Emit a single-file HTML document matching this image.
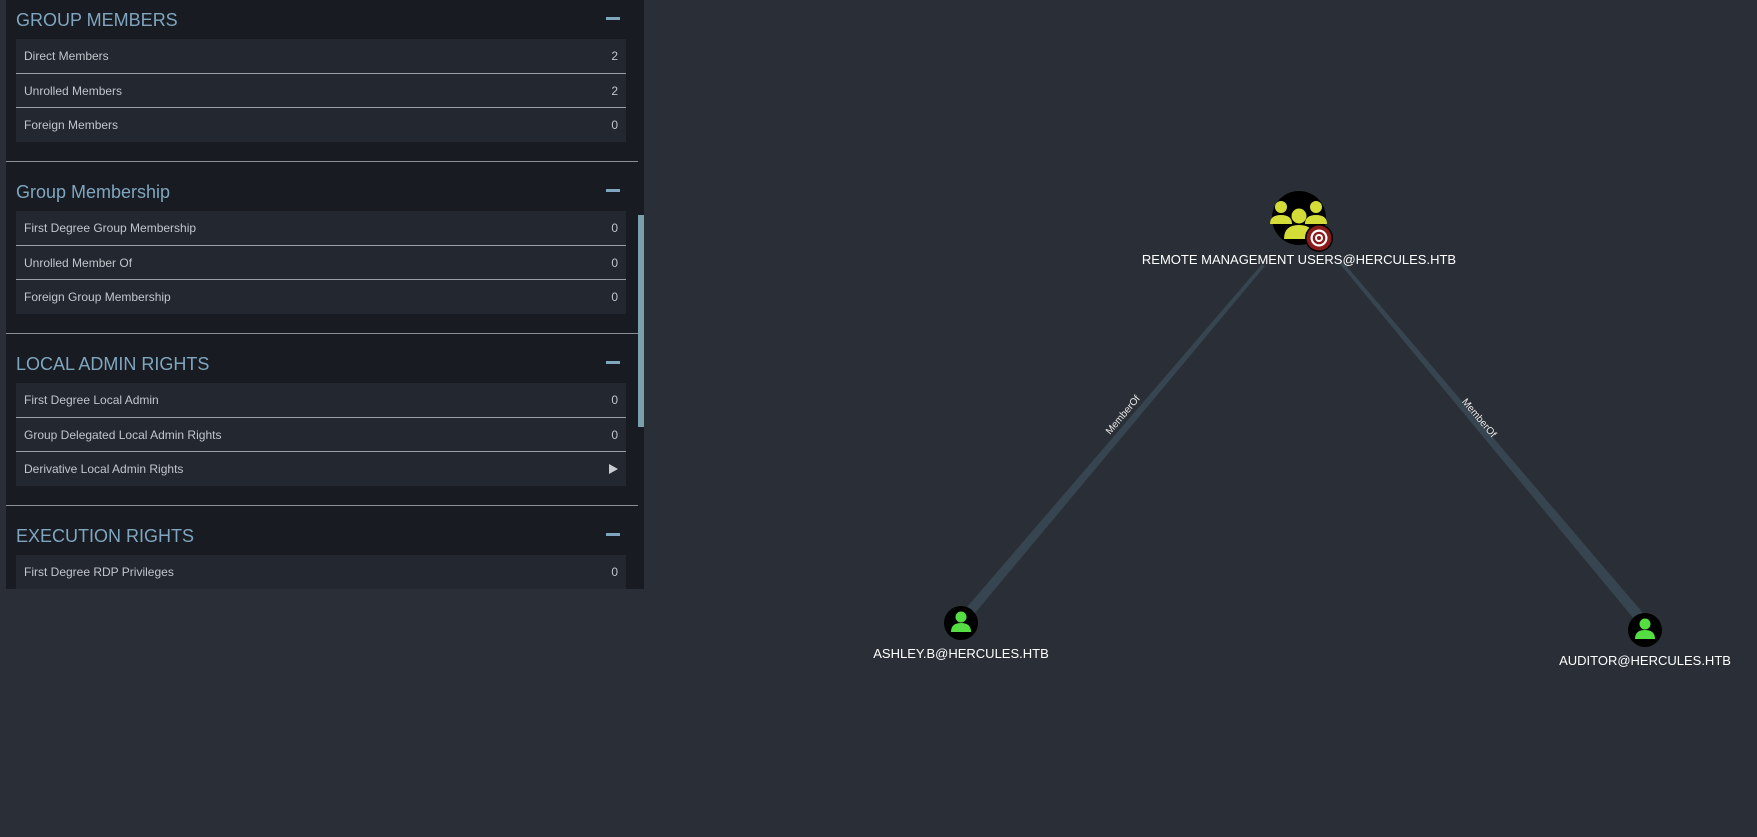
<!DOCTYPE html>
<html><head><meta charset="utf-8"><style>
html,body{margin:0;padding:0;width:1757px;height:837px;overflow:hidden;background:#2a2e36;font-family:"Liberation Sans",sans-serif}
#panel{position:absolute;left:6px;top:0;width:638px;height:589px;background:#181b22;overflow:hidden}
#sb{position:absolute;left:638px;top:215px;width:6px;height:212px;background:#7aa0ac}
.sec{position:absolute;left:0;width:632px}
.hd{position:absolute;left:10px;font-size:18px;color:#7fa6bf;top:0}
.minus{position:absolute;left:600px;width:14px;height:3px;background:#7fa6bf}
.row{position:absolute;left:10px;width:610px;height:34px;background:#222730;color:#c2c6cb;font-size:12px;line-height:34px;box-sizing:border-box;padding:0 8px}
.row span{float:right}
.sep{position:absolute;left:10px;width:610px;height:1px;background:#9aa0a6}
.div{position:absolute;left:0;width:632px;height:1px;background:#8a9098}
.tri{float:right;margin-top:12px;width:0;height:0;border-left:9px solid #c8ccd0;border-top:5.5px solid transparent;border-bottom:5.5px solid transparent}
</style></head><body>
<div id="panel">
 <div class="sec" style="top:0">
  <div class="hd" style="top:10px">GROUP MEMBERS</div><div class="minus" style="top:17px"></div>
  <div class="row" style="top:39px">Direct Members<span>2</span></div>
  <div class="sep" style="top:73px"></div>
  <div class="row" style="top:74px">Unrolled Members<span>2</span></div>
  <div class="sep" style="top:107px"></div>
  <div class="row" style="top:108px">Foreign Members<span>0</span></div>
  <div class="div" style="top:161px"></div>
 </div>
 <div class="sec" style="top:172px">
  <div class="hd" style="top:10px">Group Membership</div><div class="minus" style="top:17px"></div>
  <div class="row" style="top:39px">First Degree Group Membership<span>0</span></div>
  <div class="sep" style="top:73px"></div>
  <div class="row" style="top:74px">Unrolled Member Of<span>0</span></div>
  <div class="sep" style="top:107px"></div>
  <div class="row" style="top:108px">Foreign Group Membership<span>0</span></div>
  <div class="div" style="top:161px"></div>
 </div>
 <div class="sec" style="top:344px">
  <div class="hd" style="top:10px">LOCAL ADMIN RIGHTS</div><div class="minus" style="top:17px"></div>
  <div class="row" style="top:39px">First Degree Local Admin<span>0</span></div>
  <div class="sep" style="top:73px"></div>
  <div class="row" style="top:74px">Group Delegated Local Admin Rights<span>0</span></div>
  <div class="sep" style="top:107px"></div>
  <div class="row" style="top:108px">Derivative Local Admin Rights<i class="tri"></i></div>
  <div class="div" style="top:161px"></div>
 </div>
 <div class="sec" style="top:516px">
  <div class="hd" style="top:10px">EXECUTION RIGHTS</div><div class="minus" style="top:17px"></div>
  <div class="row" style="top:39px">First Degree RDP Privileges<span>0</span></div>
 </div>
</div>
<div id="sb"></div>
<svg style="position:absolute;left:0;top:0" width="1757" height="837">
 <polygon points="1262,264 1265,266 970,619 961,614" fill="#36454f"/>
 <polygon points="1340,264 1343,262 1643,613 1634,619" fill="#36454f"/>
 <text x="1123" y="418" font-size="10" fill="#e8e8e8" font-family="Liberation Sans" text-anchor="middle" transform="rotate(-50 1123 415)">MemberOf</text>
 <text x="1479" y="421" font-size="10" fill="#e8e8e8" font-family="Liberation Sans" text-anchor="middle" transform="rotate(50 1479 418)">MemberOf</text>
 <circle cx="1299" cy="218" r="27" fill="#000"/>
 <g fill="#d4dc38">
  <circle cx="1281" cy="207" r="6"/><circle cx="1316" cy="207" r="6"/>
  <path d="M1270 224 q0-9 11-9 q11 0 11 9 z"/><path d="M1305 224 q0-9 11-9 q11 0 11 9 z"/>
  <circle cx="1299" cy="216" r="7.5"/>
  <path d="M1284 239 q0-14 15-14 q15 0 15 14 z"/>
 </g>
 <circle cx="1319" cy="238" r="14" fill="#000"/>
 <circle cx="1319" cy="238" r="12.5" fill="#8b1a1a"/>
 <circle cx="1319" cy="238" r="8.5" fill="#fff"/>
 <circle cx="1319" cy="238" r="6.3" fill="#8b1a1a"/>
 <circle cx="1319" cy="238" r="4" fill="#fff"/>
 <circle cx="1319" cy="238" r="2" fill="#8b1a1a"/>
 <text x="1299" y="264" font-size="13" fill="#fff" font-family="Liberation Sans" text-anchor="middle">REMOTE MANAGEMENT USERS@HERCULES.HTB</text>
 <circle cx="961" cy="623" r="17" fill="#000"/>
 <circle cx="961" cy="617" r="5.5" fill="#55dd44"/>
 <path d="M951 632 q0-9 10-9 q10 0 10 9 z" fill="#55dd44"/>
 <text x="961" y="658" font-size="13" fill="#fff" font-family="Liberation Sans" text-anchor="middle">ASHLEY.B@HERCULES.HTB</text>
 <circle cx="1645" cy="630" r="17" fill="#000"/>
 <circle cx="1645" cy="624" r="5.5" fill="#55dd44"/>
 <path d="M1635 639 q0-9 10-9 q10 0 10 9 z" fill="#55dd44"/>
 <text x="1645" y="665" font-size="13" fill="#fff" font-family="Liberation Sans" text-anchor="middle">AUDITOR@HERCULES.HTB</text>
</svg>
</body></html>
